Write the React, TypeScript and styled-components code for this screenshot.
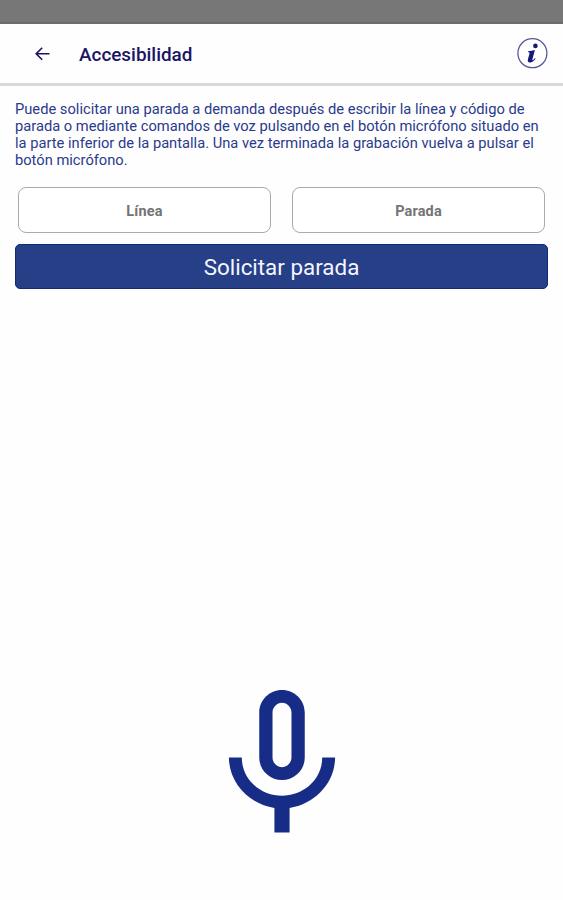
import React from "react";
import styled, { createGlobalStyle } from "styled-components";

const GlobalStyle = createGlobalStyle`
  * { box-sizing: border-box; }
  body { margin: 0; background: #fff; font-family: Roboto, "Noto Sans", sans-serif; }
  button, input { font-family: inherit; }
`;

const Screen = styled.div`
  display: flex;
  flex-direction: column;
  height: 900px;
  background: #fefefe;
  overflow: hidden;
`;

const StatusBar = styled.div`
  flex: none;
  height: 24px;
  background: #777;
  border-bottom: 2px solid #6c6c6c;
`;

const Header = styled.header`
  flex: none;
  display: flex;
  align-items: center;
  height: 62px;
  padding: 0 15px 0 33px;
  border-bottom: 3px solid #d9d9d9;
`;

const IconButton = styled.button`
  display: flex;
  padding: 0;
  border: 0;
  background: none;
`;

const Title = styled.h1`
  flex: 1;
  margin: 0 0 0 26px;
  padding-top: 2px;
  color: #1b1464;
  font-size: 18.9px;
  font-weight: 500;
  line-height: 24px;
`;

const Content = styled.main`
  flex: 1;
  display: flex;
  flex-direction: column;
  padding: 15px 15px 0;
`;

const Description = styled.p`
  margin: 0;
  color: #2a3a8c;
  font-size: 14.7px;
  line-height: 17px;
  white-space: nowrap;
`;

const Fields = styled.div`
  display: grid;
  grid-template-columns: 1fr 1fr;
  gap: 21px;
  margin: 18px 3px 0;
`;

const Field = styled.input`
  width: 100%;
  height: 46px;
  padding: 2px 12px 0;
  border: 1px solid #aaa;
  border-radius: 8px;
  background: #fff;
  text-align: center;
  font-size: 14.5px;
  font-weight: 700;
  letter-spacing: 0.15px;
  outline: none;
  &::placeholder { color: #747474; opacity: 1; }
`;

const SubmitButton = styled.button`
  flex: none;
  height: 45px;
  margin-top: 11px;
  padding: 1px 0 0;
  border: 1px solid #12297a;
  border-radius: 5px;
  background: #263f87;
  color: #f4f6ff;
  font-size: 22.4px;
`;

const MicButton = styled(IconButton)`
  align-self: center;
  margin: auto 0 45px 1px;
`;

const BackIcon = () => (
  <svg width="20" height="20" viewBox="0 0 20 20" fill="none" stroke="#1b1464" strokeWidth="1.6">
    <path d="M16.5 9.7H3.5M9.2 3.7l-6 6 6 6" />
  </svg>
);

const InfoIcon = () => (
  <svg width="32" height="32" viewBox="0 0 32 32">
    <circle cx="16.4" cy="15.2" r="14.5" fill="#fff" stroke="#55559d" strokeWidth="1.3" />
    <circle cx="19.4" cy="7.9" r="2.3" fill="#17177b" />
    <path
      d="M12.1 13.3c2.5-.2 4.6-.5 6.8-1.2l-2.5 9.2c-.3 1 .3 1.2 1 .5.6-.5 1.1-1.1 1.5-1.7l.7.5c-1.4 2.3-3.1 3.9-5.2 3.9-2 0-3-1.2-2.5-3.1l1.6-5.8c.3-1-.1-1.4-1.4-1.4z"
      fill="#17177b"
    />
  </svg>
);

const MicIcon = () => (
  <svg width="182" height="180" viewBox="0 0 24 24" preserveAspectRatio="none" fill="#172c87">
    <path d="M12 14c1.66 0 3-1.34 3-3V5c0-1.66-1.34-3-3-3S9 3.34 9 5v6c0 1.66 1.34 3 3 3zm-1.25-9c0-.69.56-1.3 1.25-1.3s1.25.61 1.25 1.3v6c0 .69-.56 1.3-1.25 1.3s-1.25-.61-1.25-1.3V5zM17.3 11c0 3-2.54 5.1-5.3 5.1S6.7 14 6.7 11H5c0 3.41 2.72 6.23 6 6.72V21h2v-3.28c3.28-.48 6-3.3 6-6.72h-1.7z" />
  </svg>
);

export default function App() {
  return (
    <>
      <GlobalStyle />
      <Screen>
        <StatusBar />
        <Header>
          <IconButton aria-label="Volver"><BackIcon /></IconButton>
          <Title>Accesibilidad</Title>
          <IconButton aria-label="Información"><InfoIcon /></IconButton>
        </Header>
        <Content>
          <Description>
            Puede solicitar una parada a demanda después de escribir la línea y código de<br />
            parada o mediante comandos de voz pulsando en el botón micrófono situado en<br />
            la parte inferior de la pantalla. Una vez terminada la grabación vuelva a pulsar el<br />
            botón micrófono.
          </Description>
          <Fields>
            <Field placeholder="Línea" aria-label="Línea" />
            <Field placeholder="Parada" aria-label="Parada" />
          </Fields>
          <SubmitButton>Solicitar parada</SubmitButton>
          <MicButton aria-label="Micrófono"><MicIcon /></MicButton>
        </Content>
      </Screen>
    </>
  );
}
